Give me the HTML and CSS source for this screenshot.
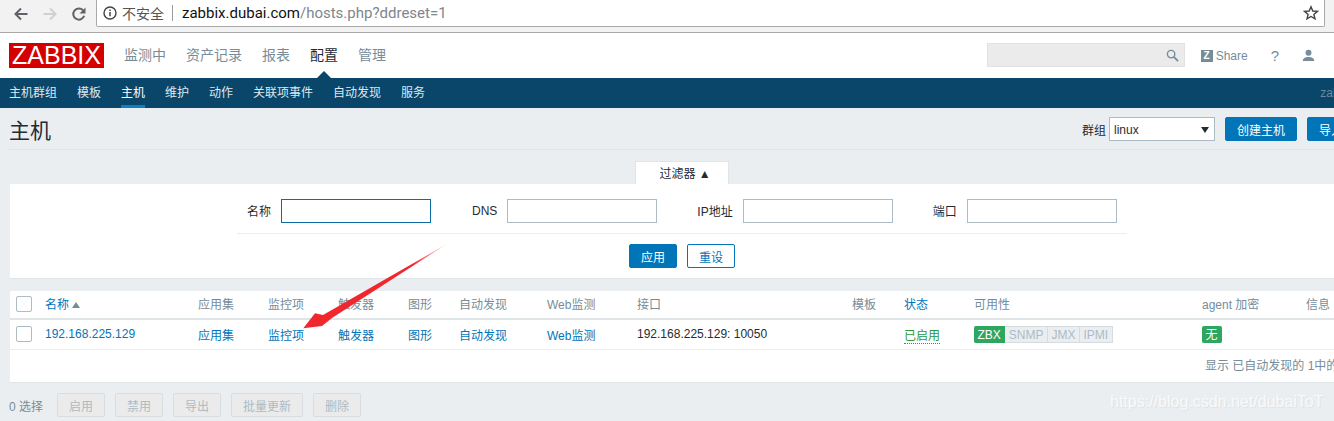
FILE: index.html
```html
<!DOCTYPE html>
<html lang="en">
<head>
  <meta charset="UTF-8">
  <title>主机</title>
  <link rel="stylesheet" href="styles.css">
</head>
<body>
  <div class="chrome">
    <div class="chrome-btns">
      <svg class="ico" viewBox="0 0 16 16"><path d="M14.5 8H3M8 2.5 2.5 8 8 13.5" fill="none" stroke="#5f6368" stroke-width="2"/></svg>
      <svg class="ico" viewBox="0 0 16 16"><path d="M1.5 8H13M8 2.500 13.500 8 8 13.500" fill="none" stroke="#d0d0d0" stroke-width="2"/></svg>
      <svg class="ico" viewBox="0 0 16 16"><path d="M13.200 9.800A5.600 5.600 0 1 1 12 4.200" fill="none" stroke="#5f6368" stroke-width="2"/><path d="M14.500 1.500v6h-6z" fill="#5f6368"/></svg>
    </div>
    <div class="urlbar">
      <svg class="ico-info" viewBox="0 0 14 14"><circle cx="7" cy="7" r="6" fill="none" stroke="#444" stroke-width="1.400"/><path d="M7 6v4.200M7 3.400v1.500" stroke="#444" stroke-width="1.500"/></svg>
      <span class="insecure">不安全</span>
      <span class="url-sep"></span>
      <span class="url-host">zabbix.dubai.com</span><span class="url-path">/hosts.php?ddreset=1</span>
      <svg class="ico-star" viewBox="0 0 16 16"><path d="M8 1.800 9.800 6l4.600.4-3.500 3 1.100 4.500L8 11.500 4 13.900l1.100-4.500-3.500-3L6.200 6z" fill="none" stroke="#444" stroke-width="1.400"/></svg>
    </div>
  </div>

  <header class="top">
    <div class="logo">ZABBIX</div>
    <nav class="main-nav">
      <a href="#">监测中</a>
      <a href="#">资产记录</a>
      <a href="#">报表</a>
      <a href="#" class="active">配置</a>
      <a href="#">管理</a>
    </nav>
    <div class="top-right">
      <div class="search">
        <svg class="ico-search" viewBox="0 0 14 14"><circle cx="5.500" cy="5.500" r="4" fill="none" stroke="#768d99" stroke-width="1.500"/><path d="M8.500 8.500 13 13" stroke="#768d99" stroke-width="2"/></svg>
      </div>
      <a href="#" class="share"><span class="share-z">Z</span>Share</a>
      <a href="#" class="help">?</a>
      <svg class="ico-user" viewBox="0 0 14 14"><circle cx="7" cy="4" r="3.200" fill="#768d99"/><path d="M.8 13c0-3.200 2.800-4.400 6.200-4.400s6.200 1.200 6.200 4.400z" fill="#768d99"/></svg>
    </div>
  </header>

  <nav class="sub-nav">
    <a href="#">主机群组</a>
    <a href="#">模板</a>
    <a href="#" class="active">主机</a>
    <a href="#">维护</a>
    <a href="#">动作</a>
    <a href="#">关联项事件</a>
    <a href="#">自动发现</a>
    <a href="#">服务</a>
    <span class="sub-user">zabbix</span>
  </nav>

  <main class="page">
    <div class="title-row">
      <h1>主机</h1>
      <div class="title-ctrl">
        <label class="group-label">群组</label>
        <div class="select">linux<span class="caret"></span></div>
        <button class="btn">创建主机</button>
        <button class="btn">导入</button>
      </div>
    </div>

    <div class="filter-tab">过滤器 ▲</div>
    <section class="filter">
      <div class="filter-fields">
        <label class="f-name">名称</label><div class="input focus"></div>
        <label class="f-dns">DNS</label><div class="input"></div>
        <label class="f-ip">IP地址</label><div class="input"></div>
        <label class="f-port">端口</label><div class="input"></div>
      </div>
      <div class="filter-btns">
        <button class="btn">应用</button>
        <button class="btn btn-alt">重设</button>
      </div>
    </section>

    <section class="list">
      <table>
        <thead>
          <tr>
            <th class="c-check"><span class="check"></span></th>
            <th class="c-name"><a href="#">名称</a> <span class="sort"></span></th>
            <th class="c-app">应用集</th>
            <th class="c-item">监控项</th>
            <th class="c-trig">触发器</th>
            <th class="c-graph">图形</th>
            <th class="c-disc">自动发现</th>
            <th class="c-web">Web监测</th>
            <th class="c-if">接口</th>
            <th class="c-tpl">模板</th>
            <th class="c-status"><a href="#">状态</a></th>
            <th class="c-avail">可用性</th>
            <th class="c-agent">agent 加密</th>
            <th class="c-info">信息</th>
          </tr>
        </thead>
        <tbody>
          <tr>
            <td><span class="check"></span></td>
            <td><a href="#">192.168.225.129</a></td>
            <td><a href="#">应用集</a></td>
            <td><a href="#">监控项</a></td>
            <td><a href="#">触发器</a></td>
            <td><a href="#">图形</a></td>
            <td><a href="#">自动发现</a></td>
            <td><a href="#">Web监测</a></td>
            <td class="dark">192.168.225.129: 10050</td>
            <td></td>
            <td><a href="#" class="enabled">已启用</a></td>
            <td>
              <span class="avail">
                <span class="tag on">ZBX</span><span class="tag">SNMP</span><span class="tag">JMX</span><span class="tag">IPMI</span>
              </span>
            </td>
            <td><span class="tag on single">无</span></td>
            <td></td>
          </tr>
        </tbody>
      </table>
      <div class="list-foot">显示 已自动发现的 1中的1</div>
    </section>

    <div class="actions">
      <span class="sel-count">0 选择</span>
      <button class="btn-off">启用</button>
      <button class="btn-off">禁用</button>
      <button class="btn-off">导出</button>
      <button class="btn-off">批量更新</button>
      <button class="btn-off">删除</button>
    </div>
  </main>

  <svg class="arrow" viewBox="0 0 160 95">
    <defs>
      <linearGradient id="arrowFade" x1="1" y1="0" x2="0" y2="1">
        <stop offset="0" stop-color="#f0282d" stop-opacity="0.1"/>
        <stop offset="0.25" stop-color="#f0282d"/>
      </linearGradient>
    </defs>
    <path d="M8.300 88.300 20 73.300l8 1.700L153 3.300 37 78l-10 8z" fill="url(#arrowFade)"/>
  </svg>
  <div class="watermark">https://blog.csdn.net/dubaiToT</div>
</body>
</html>
```

FILE: styles.css
```css
html, body {
  margin: 0;
  height: 421px;
  overflow: hidden;
}
body {
  position: relative;
  width: 1334px;
  font-family: "Liberation Sans", Arial, "Noto Sans CJK SC", sans-serif;
  font-size: 12px;
  background: #ebeef0;
  color: #1f2c33;
}
a {
  text-decoration: none;
  color: #0275b8;
}

/* browser bar */
.chrome {
  display: flex;
  height: 32px;
  background: #f2f2f2;
  border-bottom: 1px solid #a8a8a8;
}
.chrome-btns {
  display: flex;
  align-items: center;
  gap: 13px;
  width: 96px;
  padding: 0 0 4px 13px;
  box-sizing: border-box;
}
.ico {
  width: 16px;
  height: 16px;
}
.urlbar {
  display: flex;
  align-items: center;
  width: 1229px;
  height: 27px;
  background: #fff;
  border: 1px solid #a9a9a9;
  border-top: none;
  border-radius: 0 0 2px 2px;
  box-sizing: border-box;
  padding-left: 6px;
  font-family: Roboto, "Noto Sans CJK SC", sans-serif;
  font-size: 15px;
}
.ico-info {
  width: 14px;
  height: 14px;
}
.insecure {
  margin-left: 5px;
  font-size: 14px;
  color: #555;
}
.url-sep {
  width: 1px;
  height: 16px;
  background: #999;
  margin: 0 9px 0 8px;
}
.url-host {
  color: #111;
}
.url-path {
  color: #80868b;
}
.ico-star {
  width: 16px;
  height: 16px;
  margin-left: auto;
  margin-right: 5px;
}

/* top header */
.top {
  display: flex;
  align-items: center;
  height: 45px;
  background: #fff;
  padding: 0 0 0 9px;
}
.logo {
  width: 95px;
  height: 25px;
  background: #d40000;
  color: #fff;
  font-size: 25px;
  line-height: 25px;
  text-align: center;
}
.main-nav {
  display: flex;
  gap: 20px;
  margin: -3px 0 0 20px;
  font-size: 14px;
}
.main-nav a {
  color: #768d99;
  position: relative;
}
.main-nav a.active {
  color: #1f2c33;
}
.main-nav a.active::after {
  content: "";
  position: absolute;
  left: 6px;
  bottom: -15px;
  border: 8px solid transparent;
  border-top: none;
  border-bottom: 8px solid #0a466a;
}
.top-right {
  display: flex;
  align-items: center;
  margin-left: auto;
  padding-right: 19px;
}
.search {
  display: flex;
  align-items: center;
  justify-content: flex-end;
  width: 198px;
  height: 24px;
  margin-top: -1px;
  background: #ebebeb;
  border: 1px solid #e2e2e2;
  box-sizing: border-box;
  padding-right: 5px;
}
.ico-search {
  width: 13px;
  height: 13px;
}
.share {
  display: flex;
  align-items: center;
  margin-left: 16px;
  color: #768d99;
}
.share-z {
  width: 12px;
  height: 12px;
  background: #768d99;
  color: #fff;
  font-size: 10px;
  font-weight: bold;
  line-height: 12px;
  text-align: center;
  margin-right: 3px;
}
.help {
  margin-left: 23px;
  color: #768d99;
  font-size: 15px;
}
.ico-user {
  width: 13px;
  height: 13px;
  margin-left: 23px;
}

/* second nav */
.sub-nav {
  display: flex;
  height: 30px;
  background: #0a466a;
  padding-left: 9px;
  gap: 20px;
}
.sub-nav a {
  box-sizing: border-box;
  height: 30px;
  line-height: 31px;
  color: #dfe8ee;
}
.sub-nav a.active {
  color: #fff;
  border-bottom: 3px solid #0f7fc2;
}
.sub-user {
  margin-left: auto;
  margin-right: -21px;
  line-height: 31px;
  color: #6d8b9d;
}

/* page */
.page {
  width: 1400px;
  padding: 0 0 0 10px;
  box-sizing: border-box;
}
.title-row {
  display: flex;
  align-items: center;
  width: 1325px;
  height: 41px;
  margin-left: -1px;
  border-bottom: 1px solid #dfe4e7;
}
h1 {
  margin: 0;
  font-size: 21px;
  font-weight: normal;
  color: #1f2c33;
}
.title-ctrl {
  display: flex;
  align-items: center;
  flex-shrink: 0;
  margin-left: auto;
  margin-right: -31px;
}
.group-label {
  margin-right: 3px;
  padding-top: 1px;
}
.select {
  position: relative;
  width: 106px;
  height: 24px;
  background: #fff;
  border: 1px solid #acbbc4;
  box-sizing: border-box;
  line-height: 24px;
  padding-left: 4px;
  margin-right: 10px;
}
.caret {
  position: absolute;
  right: 5px;
  top: 9px;
  border: 4px solid transparent;
  border-top: 6px solid #1f2c33;
  border-bottom: none;
}
.btn {
  height: 24px;
  padding: 1px 11px 0;
  margin-right: 10px;
  background: #0275b8;
  border: 1px solid #0275b8;
  border-radius: 2px;
  color: #fff;
  font: inherit;
  white-space: nowrap;
}
.btn-alt {
  background: #fff;
  color: #0275b8;
}
.filter-tab {
  width: 94px;
  height: 23px;
  margin: 11px 0 0 625px;
  padding-left: 6px;
  background: #fff;
  border: 1px solid #dfe4e7;
  border-bottom: none;
  box-sizing: border-box;
  line-height: 24px;
  text-align: center;
}
.filter {
  height: 95px;
  background: #fff;
  border-bottom: 1px solid #dfe4e7;
  box-sizing: border-box;
}
.filter-fields {
  display: flex;
  align-items: center;
  width: 890px;
  height: 50px;
  margin-left: 227px;
  border-bottom: 1px solid #ebeef0;
  padding-top: 4px;
  box-sizing: border-box;
}
.input {
  width: 150px;
  height: 24px;
  border: 1px solid #acbbc4;
  box-sizing: border-box;
}
.input.focus {
  border-color: #0a6ba5;
}
.f-name {
  margin-left: 10px;
  margin-right: 10px;
}
.f-dns {
  margin-left: 41px;
  margin-right: 10px;
}
.f-ip {
  margin-left: 40px;
  margin-right: 10px;
}
.f-port {
  margin-left: 40px;
  margin-right: 10px;
}
.filter-btns {
  display: flex;
  justify-content: center;
  width: 1343px;
  padding: 10px 0 0 11px;
  box-sizing: border-box;
}
.filter-btns .btn {
  width: 48px;
  padding: 0;
}

/* host table */
.list {
  margin-top: 12px;
  height: 92px;
  background: #fff;
  border-bottom: 1px solid #dfe4e7;
  box-sizing: border-box;
}
table {
  border-collapse: collapse;
  table-layout: fixed;
  width: 1391px;
}
th {
  height: 28px;
  padding: 0 0 2px;
  font-weight: normal;
  text-align: left;
  color: #768d99;
  border-bottom: 2px solid #dfe4e7;
  box-sizing: border-box;
}
td {
  height: 30px;
  padding: 0;
  border-bottom: 1px solid #ebeef0;
  box-sizing: border-box;
}
td.dark {
  color: #1f2c33;
}
.check {
  display: block;
  width: 16px;
  height: 16px;
  margin-left: 6px;
  border: 1px solid #acbbc4;
  border-radius: 2px;
  box-sizing: border-box;
}
.c-check { width: 35px; }
.c-name { width: 153px; }
.c-app { width: 70px; }
.c-item { width: 70px; }
.c-trig { width: 70px; }
.c-graph { width: 51px; }
.c-disc { width: 88px; }
.c-web { width: 90px; }
.c-if { width: 215px; }
.c-tpl { width: 52px; }
.c-status { width: 70px; }
.c-avail { width: 228px; }
.c-agent { width: 104px; }
.sort {
  display: inline-block;
  vertical-align: 1px;
  border: 4px solid transparent;
  border-top: none;
  border-bottom: 6px solid #768d99;
}
.enabled {
  color: #2a9a3c;
  border-bottom: 1px dotted #2a9a3c;
}
.avail {
  display: inline-flex;
  border-radius: 2px;
}
.tag {
  height: 17px;
  line-height: 16px;
  padding: 0 3.5px;
  background: #ebeef0;
  color: #acbbc4;
  border: 1px solid #d4dce0;
  border-left: none;
  box-sizing: border-box;
}
.tag.on {
  background: #2fa65f;
  border-color: #2fa65f;
  color: #fff;
  border-radius: 2px 0 0 2px;
}
.tag.single {
  display: inline-block;
  width: 20px;
  padding: 0;
  text-align: center;
  border-radius: 2px;
}
.list-foot {
  height: 33px;
  line-height: 32px;
  padding-left: 1195px;
  color: #768d99;
  white-space: nowrap;
}
.actions {
  display: flex;
  align-items: center;
  gap: 10px;
  height: 24px;
  margin: 10px 0 0 -1px;
}
.sel-count {
  color: #768d99;
  margin-right: 4px;
}
.btn-off {
  height: 24px;
  padding: 0 11px;
  background: #ebebeb;
  border: 1px solid #d8dde0;
  border-radius: 2px;
  color: #acbbc4;
  font: inherit;
}

/* overlays */
.arrow {
  position: absolute;
  left: 295px;
  top: 240px;
  width: 160px;
  height: 95px;
}
.watermark {
  position: absolute;
  left: 1110px;
  top: 393px;
  font-size: 16px;
  color: #fff;
  opacity: 0.7;
  text-shadow: 1px 1px 1px rgba(0, 0, 0, 0.08);
}
```
